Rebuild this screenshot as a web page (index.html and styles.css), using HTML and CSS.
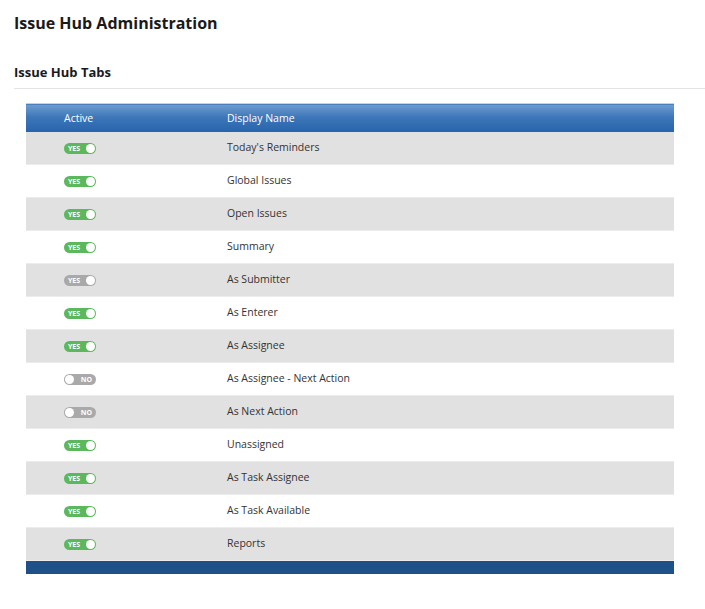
FILE: index.html
```html
<!DOCTYPE html>
<html lang="en">
<head>
  <meta charset="UTF-8">
  <title>Issue Hub Administration</title>
  <link rel="stylesheet" href="styles.css">
</head>
<body>
  <h1 class="page-title">Issue Hub Administration</h1>
  <h2 class="section-title">Issue Hub Tabs</h2>

  <div class="grid-wrap">
    <table class="grid">
      <thead>
        <tr>
          <th class="col-active">Active</th>
          <th>Display Name</th>
        </tr>
      </thead>
      <tbody>
        <tr><td class="col-active"><span class="toggle on"><b>YES</b><i></i></span></td><td>Today's Reminders</td></tr>
        <tr><td class="col-active"><span class="toggle on"><b>YES</b><i></i></span></td><td>Global Issues</td></tr>
        <tr><td class="col-active"><span class="toggle on"><b>YES</b><i></i></span></td><td>Open Issues</td></tr>
        <tr><td class="col-active"><span class="toggle on"><b>YES</b><i></i></span></td><td>Summary</td></tr>
        <tr><td class="col-active"><span class="toggle on dim"><b>YES</b><i></i></span></td><td>As Submitter</td></tr>
        <tr><td class="col-active"><span class="toggle on"><b>YES</b><i></i></span></td><td>As Enterer</td></tr>
        <tr><td class="col-active"><span class="toggle on"><b>YES</b><i></i></span></td><td>As Assignee</td></tr>
        <tr><td class="col-active"><span class="toggle off"><i></i><b>NO</b></span></td><td>As Assignee - Next Action</td></tr>
        <tr><td class="col-active"><span class="toggle off"><i></i><b>NO</b></span></td><td>As Next Action</td></tr>
        <tr><td class="col-active"><span class="toggle on"><b>YES</b><i></i></span></td><td>Unassigned</td></tr>
        <tr><td class="col-active"><span class="toggle on"><b>YES</b><i></i></span></td><td>As Task Assignee</td></tr>
        <tr><td class="col-active"><span class="toggle on"><b>YES</b><i></i></span></td><td>As Task Available</td></tr>
        <tr><td class="col-active"><span class="toggle on"><b>YES</b><i></i></span></td><td>Reports</td></tr>
      </tbody>
      <tfoot>
        <tr><td colspan="2"></td></tr>
      </tfoot>
    </table>
  </div>
</body>
</html>
```

FILE: styles.css
```css
body {
  font-family: 'Open Sans', 'Noto Sans', sans-serif;
  color: #222;
  margin: 0;
  padding: 0 0 0 14px;
  background: #ffffff;
}

.page-title {
  font-size: 16px;
  font-weight: bold;
  margin: 0;
  padding-top: 12px;
  line-height: 22px;
  color: #1a1a1a;
}

.section-title {
  font-size: 13px;
  font-weight: bold;
  margin: 28px 0 0 0;
  line-height: 20px;
  padding-bottom: 6px;
  border-bottom: 1px solid #e4e4e4;
  color: #1a1a1a;
}

.grid-wrap {
  padding: 14px 31px 0 12px;
}

.grid {
  width: 100%;
  border-collapse: collapse;
  font-size: 10.5px;
}

.grid thead th {
  text-align: left;
  font-weight: normal;
  color: #ffffff;
  height: 27px;
  padding: 0 0 1px 0;
  border-top: 1px solid #d0d0d0;
  background: linear-gradient(to bottom, #6f9ccf 0%, #3d77b9 45%, #2763ab 100%);
}

.grid td {
  height: 30px;
  padding: 0 0 2px 0;
  color: #333;
  border-bottom: 1px solid #ececec;
}

.grid .col-active {
  width: 163px;
  padding-left: 38px;
}

.grid tbody tr:nth-child(odd) td {
  background: #e1e1e1;
}

.grid tfoot td {
  height: 13px;
  padding: 0;
  border-bottom: none;
  border-top: 1px solid #183c66;
  background: #1f5189;
}

.toggle {
  display: inline-flex;
  align-items: center;
  box-sizing: border-box;
  width: 32px;
  height: 11px;
  border-radius: 6px;
  padding: 0 1px 0 4px;
  vertical-align: middle;
  justify-content: space-between;
}

.toggle.on {
  background: #5cb85c;
}

.toggle.dim {
  background: #a9a9a9;
}

.toggle.off {
  background: #a9a9a9;
  padding: 0 4px 0 1px;
}

.toggle b {
  color: #ffffff;
  font-size: 7px;
  font-weight: bold;
  line-height: 11px;
}

.toggle i {
  width: 9px;
  height: 9px;
  border-radius: 50%;
  background: #ffffff;
}
```
